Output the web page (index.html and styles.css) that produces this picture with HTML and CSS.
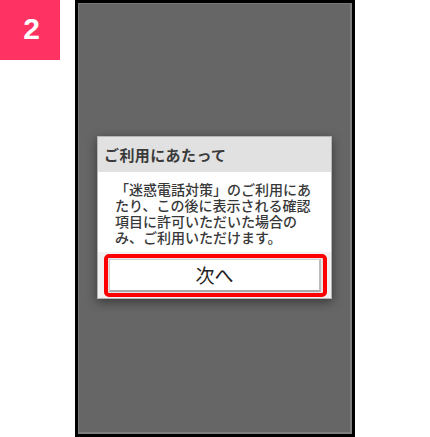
FILE: index.html
```html
<!DOCTYPE html>
<html lang="ja">
<head>
<meta charset="utf-8">
<link rel="stylesheet" href="styles.css">
</head>
<body>
<div class="page">
  <div class="badge">2</div>
  <div class="phone">
    <div class="screen">
      <div class="dialog">
        <div class="dialog-title">ご利用にあたって</div>
        <div class="dialog-body">
          <p class="msg">「迷惑電話対策」のご利用にあ<br>たり、この後に表示される確認<br>項目に許可いただいた場合の<br>み、ご利用いただけます。</p>
        </div>
        <div class="dialog-actions">
          <div class="highlight">
            <div class="btn">次へ</div>
          </div>
        </div>
      </div>
    </div>
  </div>
</div>
</body>
</html>
```
FILE: styles.css
```css
html, body {
  margin: 0;
  padding: 0;
  background: #ffffff;
}
.page {
  display: flex;
  align-items: flex-start;
  width: 430px;
  height: 437px;
}
.badge {
  width: 60px;
  height: 60px;
  background: #fe3364;
  color: #ffffff;
  font-family: "Liberation Sans", Arial, sans-serif;
  font-weight: bold;
  font-size: 30px;
  line-height: 58px;
  text-align: center;
  text-indent: 3px;
}
.phone {
  margin-left: 15px;
  width: 280px;
  height: 437px;
  box-sizing: border-box;
  background: #000000;
  padding: 3px;
}
.screen {
  box-sizing: border-box;
  width: 100%;
  height: 100%;
  background: #666666;
  border-top: 1px solid #777777;
  border-left: 1px solid #7a7a7a;
  border-right: 2px solid #7e7e7e;
  border-bottom: 2px solid #7e7e7e;
  display: flex;
  align-items: center;
  justify-content: center;
  padding-bottom: 1px;
}
.dialog {
  width: 235px;
  box-sizing: border-box;
  border: 1px solid #b5b5b5;
  background: #ffffff;
  box-shadow: 0 3px 10px rgba(0, 0, 0, 0.45);
  font-family: "Noto Sans CJK JP", "Noto Sans", sans-serif;
}
.dialog-title {
  height: 35px;
  background: #e1e1e1;
  color: #3a3a3a;
  font-size: 15px;
  font-weight: bold;
  line-height: 35px;
  padding-left: 6px;
  letter-spacing: 0.4px;
}
.dialog-body {
  background: #ffffff;
  padding: 9px 0 7px 17px;
}
.msg {
  margin: 0;
  width: 212px;
  white-space: nowrap;
  font-size: 14px;
  line-height: 16px;
  color: #383838;
  font-weight: 500;
}
.dialog-actions {
  background: #f2f2f2;
  padding: 2px 4px 1px 6px;
}
.highlight {
  border: 4px solid #ff0000;
  border-radius: 5px;
  background: #e6e6e6;
}
.btn {
  margin: 1px 2px 1px 1px;
  height: 30px;
  background: #ffffff;
  border: 1px solid #d0d0d0;
  border-bottom: 2px solid #aaaaaa;
  border-right: 2px solid #bcbcbc;
  color: #222222;
  font-size: 19px;
  line-height: 30px;
  text-align: center;
}
```
